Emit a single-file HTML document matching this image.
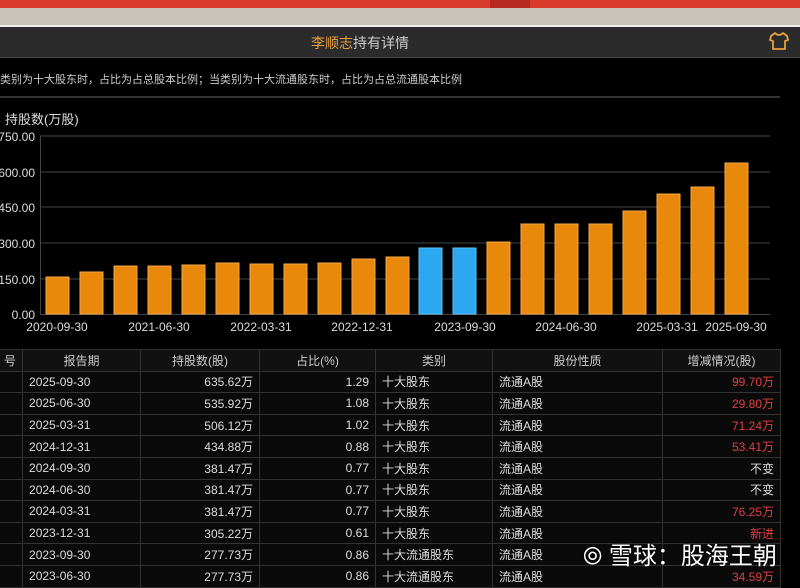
<!DOCTYPE html>
<html><head><meta charset="utf-8"><style>
body{margin:0;width:800px;height:579px;background:#000;overflow:hidden;font-family:"Liberation Sans","Noto Sans CJK SC",sans-serif;position:relative;color:#ddd}
.a{position:absolute}
table{position:absolute;left:-3px;top:349px;border-collapse:collapse;font-size:12px;color:#ddd;table-layout:fixed}
td{height:20.6px;border:1px solid #333;padding:0 6px;white-space:nowrap;background:#0a0a0a;overflow:hidden}
tr.h td{background:#111;text-align:center;color:#ccc}
.r{text-align:right}.red{color:#e04040}
</style></head><body>
<div class="a" style="left:0;top:0;width:800px;height:8px;background:#d83a2e"></div>
<div class="a" style="left:490px;top:0;width:40px;height:8px;background:#b82a20"></div>
<div class="a" style="left:0;top:8px;width:800px;height:17px;background:#c9c3b9"></div>
<div class="a" style="left:0;top:25px;width:800px;height:2px;background:#eee"></div>
<div class="a" style="left:0;top:27px;width:800px;height:30px;background:#2b2b2b;border-bottom:1px solid #444"></div>
<div class="a" style="left:0;top:33px;width:720px;text-align:center;font-size:14px;color:#ccc"><span style="color:#e8a040">李顺志</span>持有详情</div>
<svg class="a" style="left:769px;top:32px" width="20" height="18" viewBox="0 0 20 18"><path d="M6 1 L2 4 L1 8 L4 9 L4 17 L16 17 L16 9 L19 8 L18 4 L14 1 Q10 5 6 1 Z" fill="none" stroke="#e8a040" stroke-width="1.8" stroke-linejoin="round"/></svg>
<div class="a" style="left:0;top:71px;font-size:11px;color:#ccc">类别为十大股东时，占比为占总股本比例；当类别为十大流通股东时，占比为占总流通股本比例</div>
<div class="a" style="left:0;top:96px;width:780px;height:2px;background:#333"></div>
<div class="a" style="left:5px;top:109px;font-size:13px;color:#ddd">持股数(万股)</div>
<svg class="a" style="left:0;top:125px" width="800" height="215">
<g stroke="#444" stroke-width="1">
<line x1="40" y1="11" x2="770" y2="11"/><line x1="40" y1="47" x2="770" y2="47"/><line x1="40" y1="82" x2="770" y2="82"/><line x1="40" y1="118" x2="770" y2="118"/><line x1="40" y1="154" x2="770" y2="154"/><line x1="40" y1="189.5" x2="770" y2="189.5"/><line x1="40.5" y1="11" x2="40.5" y2="190"/>
</g>
<g font-family="Liberation Sans,sans-serif" font-size="12" fill="#ddd" text-anchor="end">
<text x="35" y="16">750.00</text><text x="35" y="52">600.00</text><text x="35" y="87">450.00</text><text x="35" y="123">300.00</text><text x="35" y="159">150.00</text><text x="35" y="194">0.00</text>
</g>
<g font-family="Liberation Sans,sans-serif" font-size="12" fill="#ddd" text-anchor="middle">
<text x="57" y="206">2020-09-30</text><text x="159" y="206">2021-06-30</text><text x="261" y="206">2022-03-31</text><text x="362" y="206">2022-12-31</text><text x="465" y="206">2023-09-30</text><text x="566" y="206">2024-06-30</text><text x="667" y="206">2025-03-31</text><text x="736" y="206">2025-09-30</text>
</g>
<g fill="#e8890c" stroke="#f3a84a" stroke-width="1">
<rect x="46" y="152" width="23" height="37"/><rect x="80" y="147" width="23" height="42"/><rect x="114" y="141" width="23" height="48"/><rect x="148" y="141" width="23" height="48"/><rect x="182" y="140" width="23" height="49"/><rect x="216" y="138" width="23" height="51"/><rect x="250" y="139" width="23" height="50"/><rect x="284" y="139" width="23" height="50"/><rect x="318" y="138" width="23" height="51"/><rect x="352" y="134" width="23" height="55"/><rect x="386" y="132" width="23" height="57"/>
<rect x="487" y="117" width="23" height="72"/><rect x="521" y="99" width="23" height="90"/><rect x="555" y="99" width="23" height="90"/><rect x="589" y="99" width="23" height="90"/><rect x="623" y="86" width="23" height="103"/><rect x="657" y="69" width="23" height="120"/><rect x="691" y="62" width="23" height="127"/><rect x="725" y="38" width="23" height="151"/>
</g>
<g fill="#2aa8f0" stroke="#60c0f8"><rect x="419" y="123" width="23" height="66"/><rect x="453" y="123" width="23" height="66"/></g>
</svg>
<table>
<colgroup><col style="width:25px"><col style="width:118px"><col style="width:119px"><col style="width:116px"><col style="width:117px"><col style="width:170px"><col style="width:118px"></colgroup>
<tr class="h"><td>号</td><td>报告期</td><td>持股数(股)</td><td>占比(%)</td><td>类别</td><td>股份性质</td><td>增减情况(股)</td></tr>
<tr><td></td><td>2025-09-30</td><td class="r">635.62万</td><td class="r">1.29</td><td>十大股东</td><td>流通A股</td><td class="r red">99.70万</td></tr>
<tr><td></td><td>2025-06-30</td><td class="r">535.92万</td><td class="r">1.08</td><td>十大股东</td><td>流通A股</td><td class="r red">29.80万</td></tr>
<tr><td></td><td>2025-03-31</td><td class="r">506.12万</td><td class="r">1.02</td><td>十大股东</td><td>流通A股</td><td class="r red">71.24万</td></tr>
<tr><td></td><td>2024-12-31</td><td class="r">434.88万</td><td class="r">0.88</td><td>十大股东</td><td>流通A股</td><td class="r red">53.41万</td></tr>
<tr><td></td><td>2024-09-30</td><td class="r">381.47万</td><td class="r">0.77</td><td>十大股东</td><td>流通A股</td><td class="r">不变</td></tr>
<tr><td></td><td>2024-06-30</td><td class="r">381.47万</td><td class="r">0.77</td><td>十大股东</td><td>流通A股</td><td class="r">不变</td></tr>
<tr><td></td><td>2024-03-31</td><td class="r">381.47万</td><td class="r">0.77</td><td>十大股东</td><td>流通A股</td><td class="r red">76.25万</td></tr>
<tr><td></td><td>2023-12-31</td><td class="r">305.22万</td><td class="r">0.61</td><td>十大股东</td><td>流通A股</td><td class="r red">新进</td></tr>
<tr><td></td><td>2023-09-30</td><td class="r">277.73万</td><td class="r">0.86</td><td>十大流通股东</td><td>流通A股</td><td class="r"></td></tr>
<tr><td></td><td>2023-06-30</td><td class="r">277.73万</td><td class="r">0.86</td><td>十大流通股东</td><td>流通A股</td><td class="r red">34.59万</td></tr>
</table>
<div class="a" style="left:583px;top:536px;font-size:24px;color:#fff;text-shadow:0 0 2px #000;white-space:nowrap">⦾ 雪球：股海王朝</div>
</body></html>
